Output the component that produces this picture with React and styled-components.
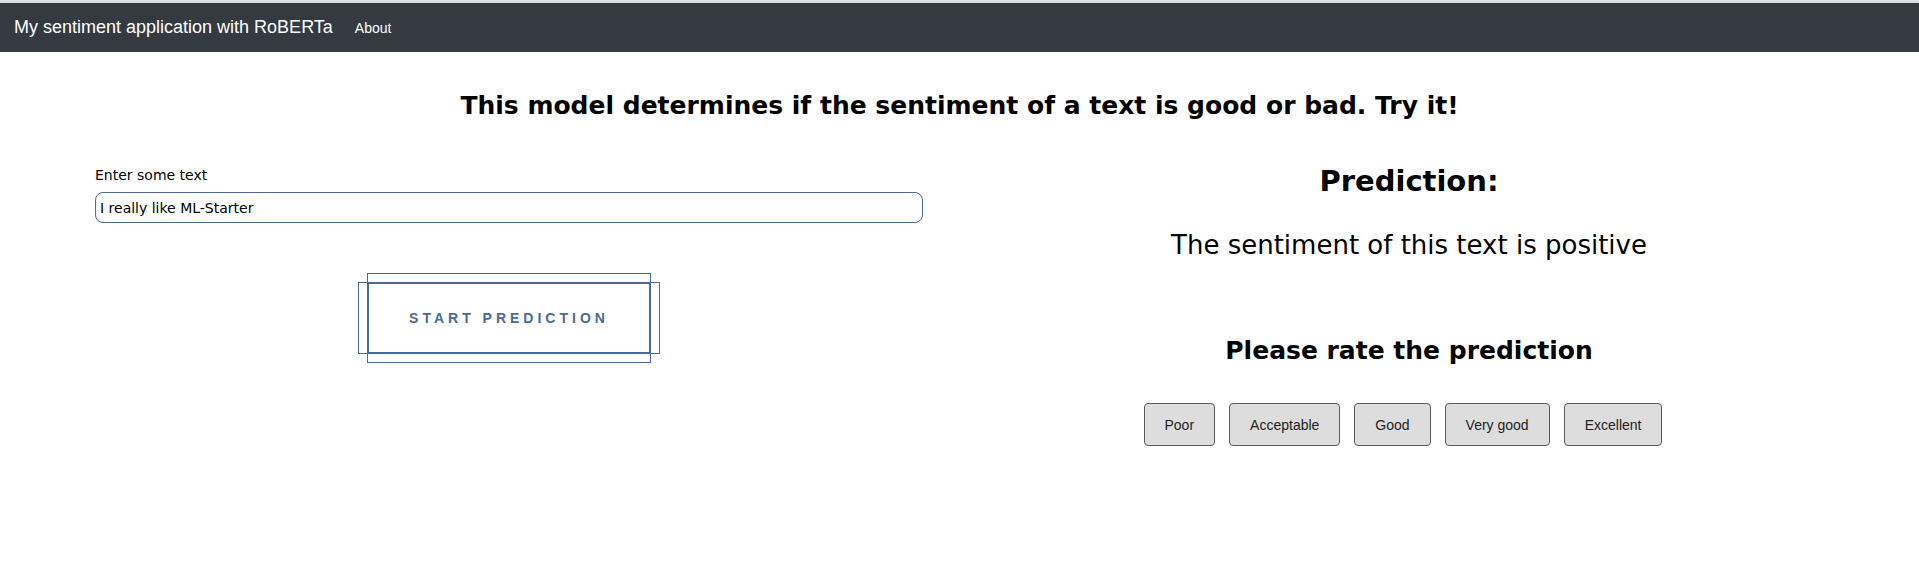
import React from "react";
import styled, { createGlobalStyle } from "styled-components";

const GlobalStyle = createGlobalStyle`
  body {
    margin: 0;
    background: #ffffff;
    font-family: "DejaVu Sans", sans-serif;
    color: #000;
  }
`;

const Navbar = styled.nav`
  display: flex;
  align-items: center;
  height: 49px;
  border-top: 3px solid #dcdcdc;
  background-color: #343a40;
  padding: 0 14px;
  font-family: "Liberation Sans", Arial, sans-serif;
`;

const Brand = styled.span`
  color: #ffffff;
  font-size: 18px;
  margin-right: 22px;
`;

const NavLink = styled.a`
  color: #ffffff;
  font-size: 14px;
  text-decoration: none;
`;

const Title = styled.h1`
  margin: 39px 0 0;
  text-align: center;
  font-size: 25px;
  line-height: 30px;
  font-weight: bold;
`;

const Row = styled.div`
  display: flex;
  padding: 0 24px 0 95px;
  margin-top: 43px;
`;

const LeftCol = styled.div`
  width: 828px;
  padding-top: 3px;
  display: flex;
  flex-direction: column;
`;

const Label = styled.label`
  font-size: 14px;
  margin-bottom: 9px;
`;

const TextInput = styled.input`
  box-sizing: border-box;
  height: 31px;
  border: 1px solid #4a6a9c;
  border-radius: 8px;
  padding: 0 4px;
  font-family: "DejaVu Sans", sans-serif;
  font-size: 14px;
  color: #000;
  outline: none;
`;

const ButtonWrap = styled.div`
  display: flex;
  justify-content: center;
  margin-top: 59px;
`;

const PredictButton = styled.button`
  position: relative;
  box-sizing: border-box;
  width: 284px;
  height: 72px;
  background: #ffffff;
  border: 2px solid #4a6a9c;
  color: #4a6a9c;
  font-family: "Liberation Sans", Arial, sans-serif;
  font-weight: bold;
  font-size: 14px;
  letter-spacing: 4px;
  text-transform: uppercase;
  cursor: pointer;

  &::before,
  &::after {
    content: "";
    position: absolute;
    border: 1px solid #4a6a9c;
  }
  &::before {
    top: -2px;
    bottom: -2px;
    left: -11px;
    right: -11px;
  }
  &::after {
    top: -11px;
    bottom: -11px;
    left: -2px;
    right: -2px;
  }
`;

const RightCol = styled.div`
  flex: 1;
  display: flex;
  flex-direction: column;
  align-items: center;
`;

const PredictionTitle = styled.h2`
  margin: 0;
  font-size: 29px;
  font-weight: bold;
  line-height: 34px;
`;

const Sentence = styled.p`
  margin: 32px 0 0;
  font-size: 26px;
  line-height: 30px;
`;

const RateTitle = styled.h3`
  margin: 76px 0 0;
  font-size: 25px;
  line-height: 30px;
  font-weight: bold;
`;

const RatingRow = styled.div`
  display: flex;
  margin-top: 37px;
  padding-left: 2px;
`;

const RateButton = styled.button`
  box-sizing: border-box;
  height: 43px;
  padding: 0 20px;
  margin-right: 14px;
  background-color: #dddddd;
  border: 1px solid #5a5a5a;
  border-radius: 4px;
  color: #222;
  font-family: "Liberation Sans", Arial, sans-serif;
  font-size: 14px;
  cursor: pointer;
`;

const ratings = ["Poor", "Acceptable", "Good", "Very good", "Excellent"];

export default function App() {
  return (
    <>
      <GlobalStyle />
      <Navbar>
        <Brand>My sentiment application with RoBERTa</Brand>
        <NavLink href="#">About</NavLink>
      </Navbar>
      <Title>
        This model determines if the sentiment of a text is good or bad. Try it!
      </Title>
      <Row>
        <LeftCol>
          <Label>Enter some text</Label>
          <TextInput defaultValue="I really like ML-Starter" />
          <ButtonWrap>
            <PredictButton>Start prediction</PredictButton>
          </ButtonWrap>
        </LeftCol>
        <RightCol>
          <PredictionTitle>Prediction:</PredictionTitle>
          <Sentence>The sentiment of this text is positive</Sentence>
          <RateTitle>Please rate the prediction</RateTitle>
          <RatingRow>
            {ratings.map((r) => (
              <RateButton key={r}>{r}</RateButton>
            ))}
          </RatingRow>
        </RightCol>
      </Row>
    </>
  );
}
